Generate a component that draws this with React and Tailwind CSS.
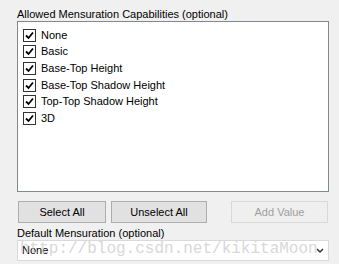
import { useState } from 'react';

const opciones = [
  'None',
  'Basic',
  'Base-Top Height',
  'Base-Top Shadow Height',
  'Top-Top Shadow Height',
  '3D',
];

function Check({ checked }) {
  return (
    <span className="w-[13px] h-[13px] border border-[#333333] bg-white flex items-center justify-center shrink-0">
      {checked && (
        <svg width="9" height="9" viewBox="0 0 9 9">
          <path d="M1 4.5 L3.5 7 L8 1.5" fill="none" stroke="#000" strokeWidth="1.8" />
        </svg>
      )}
    </span>
  );
}

export default function App() {
  const [marcados, setMarcados] = useState(opciones.map(() => true));

  const toggle = (i) => setMarcados(marcados.map((m, j) => (j === i ? !m : m)));

  return (
    <div
      className="relative w-[339px] h-[264px] bg-[#f0f0f0] overflow-hidden pt-[7px] pl-[17px] text-[11px] text-black"
      style={{ fontFamily: '"Liberation Sans", Arial, sans-serif' }}
    >
      <div className="leading-[14px]">Allowed Mensuration Capabilities (optional)</div>

      {/* lista de opciones */}
      <div className="w-[312px] h-[171px] border border-[#828790] bg-white pt-[5px] pl-[5px]">
        {opciones.map((op, i) => (
          <div key={op} className="flex items-center gap-[5px] h-[16.6px] cursor-default" onClick={() => toggle(i)}>
            <Check checked={marcados[i]} />
            <span className="leading-[13px]">{op}</span>
          </div>
        ))}
      </div>

      {/* botones */}
      <div className="flex mt-[9px] ml-[1px] h-[22px]">
        <button className="w-[88px] h-full border border-[#adadad] bg-[#e1e1e1]">Select All</button>
        <button className="w-[96px] h-full ml-[5px] border border-[#adadad] bg-[#e1e1e1]">Unselect All</button>
        <button disabled className="w-[97px] h-full ml-[24px] border border-[#d9d9d9] bg-[#efefef] text-[#a0a0a0]">
          Add Value
        </button>
      </div>

      <div className="mt-[4px] leading-[13px]">Default Mensuration (optional)</div>
      <div className="w-[312px] h-[21px] border border-[#d9d9d9] bg-white flex items-center pl-[4px] pr-[4px]">
        <span className="flex-1">None</span>
        <svg width="8" height="6" viewBox="0 0 8 6">
          <path d="M1 1 L4 4 L7 1" fill="none" stroke="#333" strokeWidth="1.5" />
        </svg>
      </div>

      {/* marca de agua */}
      <div
        className="absolute left-[20px] top-[238px] text-[16px] leading-[22px] text-[#cfcfcf] opacity-80 pointer-events-none"
        style={{ fontFamily: '"Liberation Mono", "Courier New", monospace' }}
      >
        http://blog.csdn.net/kikitaMoon
      </div>
    </div>
  );
}
